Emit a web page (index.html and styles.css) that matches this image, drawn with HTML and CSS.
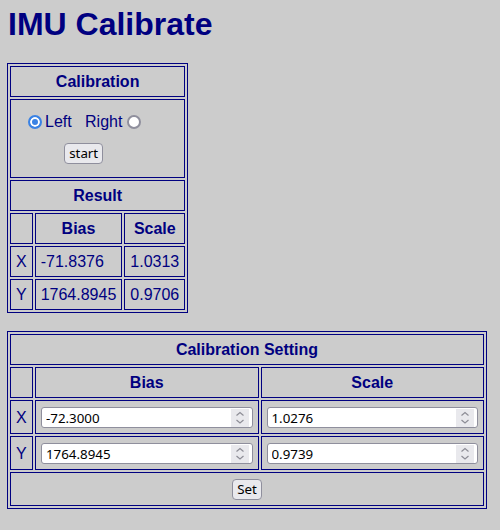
FILE: index.html
```html
<!DOCTYPE html>
<html>
<head>
<meta charset="utf-8">
<title>IMU Calibrate</title>
<link rel="stylesheet" href="styles.css">
</head>
<body>
<h1 class="title">IMU Calibrate</h1>
<table class="grid">
  <tr><th colspan="3">Calibration</th></tr>
  <tr>
    <td colspan="3" class="choice-cell">
      <div class="choice">
        <div class="radios"><input class="radio" type="radio" name="side" checked><span class="radio-text">Left&nbsp;&nbsp;&nbsp;Right</span><input class="radio radio-r" type="radio" name="side"></div>
        <button class="btn" type="button">start</button>
      </div>
    </td>
  </tr>
  <tr><th colspan="3">Result</th></tr>
  <tr><th></th><th>Bias</th><th>Scale</th></tr>
  <tr><td>X</td><td>-71.8376</td><td>1.0313</td></tr>
  <tr><td>Y</td><td>1764.8945</td><td>0.9706</td></tr>
</table>
<br>
<table class="grid wide">
  <colgroup><col class="c-axis"><col class="c-half"><col class="c-half"></colgroup>
  <tr><th colspan="3">Calibration Setting</th></tr>
  <tr><th></th><th>Bias</th><th>Scale</th></tr>
  <tr>
    <td>X</td>
    <td class="field-cell"><div class="field"><input class="num" type="number" value="-72.3000" step="0.0001"><span class="spin"><svg width="18" height="18" viewBox="0 0 18 18"><polyline points="5.5,6.5 9,3.5 12.5,6.5"/><polyline points="5.5,11 9,14 12.5,11"/></svg></span></div></td>
    <td class="field-cell"><div class="field"><input class="num" type="number" value="1.0276" step="0.0001"><span class="spin"><svg width="18" height="18" viewBox="0 0 18 18"><polyline points="5.5,6.5 9,3.5 12.5,6.5"/><polyline points="5.5,11 9,14 12.5,11"/></svg></span></div></td>
  </tr>
  <tr>
    <td>Y</td>
    <td class="field-cell"><div class="field"><input class="num" type="number" value="1764.8945" step="0.0001"><span class="spin"><svg width="18" height="18" viewBox="0 0 18 18"><polyline points="5.5,6.5 9,3.5 12.5,6.5"/><polyline points="5.5,11 9,14 12.5,11"/></svg></span></div></td>
    <td class="field-cell"><div class="field"><input class="num" type="number" value="0.9739" step="0.0001"><span class="spin"><svg width="18" height="18" viewBox="0 0 18 18"><polyline points="5.5,6.5 9,3.5 12.5,6.5"/><polyline points="5.5,11 9,14 12.5,11"/></svg></span></div></td>
  </tr>
  <tr><td colspan="3" class="set-cell"><div class="set-wrap"><button class="btn" type="button">Set</button></div></td></tr>
</table>
</body>
</html>
```
FILE: styles.css
```css
html {
  background: #cccccc;
}
body {
  margin: 0;
  padding: 6px 7px;
  font-family: "Liberation Sans", Arial, sans-serif;
  font-size: 16px;
  color: #000080;
}
.title {
  margin: 0 0 20px 1px;
  font-size: 32px;
  font-weight: bold;
  color: #000080;
}
.grid {
  border: 1px solid #000080;
  border-spacing: 2px;
}
.grid th,
.grid td {
  border: 1px solid #000080;
  padding: 5px;
  line-height: 19px;
  color: #000080;
}
.grid th {
  font-weight: bold;
  text-align: center;
}
.grid td {
  text-align: left;
}
.grid td.choice-cell {
  padding: 12px 5px 13px 5px;
}
.choice {
  display: inline-flex;
  flex-direction: column;
  align-items: center;
  margin-left: 7px;
}
.radios {
  display: flex;
  align-items: center;
  height: 19px;
}
.radio {
  -webkit-appearance: none;
  appearance: none;
  box-sizing: border-box;
  width: 14px;
  height: 14px;
  margin: 1px 3px 0 5px;
  border: 2px solid #8f8f9d;
  border-radius: 50%;
  background: #ffffff;
}
.radio:checked {
  border-color: #3a82e4;
  background: #3a82e4;
  box-shadow: inset 0 0 0 2px #ffffff;
}
.radio-r {
  margin-right: 3px;
}
.btn {
  display: block;
  box-sizing: border-box;
  height: 21px;
  margin: 0;
  padding: 0 4px;
  border: 1px solid #8f8f9d;
  border-radius: 4px;
  background: #e9e9ed;
  color: #000000;
  font-family: "Noto Sans", "Open Sans", sans-serif;
  font-size: 13.33px;
  line-height: 19px;
}
.choice .btn {
  margin-top: 12px;
}
.wide {
  width: 480px;
  table-layout: fixed;
}
.c-axis {
  width: 23px;
}
.c-half {
  width: auto;
}
.grid td.field-cell,
.grid td.set-cell {
  padding: 6px 5px 5px 5px;
}
.field {
  display: flex;
  align-items: center;
  box-sizing: border-box;
  height: 21px;
  padding: 0 3px 0 3px;
  border: 1px solid #8f8f9d;
  border-radius: 3px;
  background: #ffffff;
}
.num {
  flex: 1 1 auto;
  width: 10px;
  min-width: 0;
  height: 19px;
  margin: 0;
  padding: 0 0 0 1px;
  border: none;
  outline: none;
  background: transparent;
  color: #000000;
  font-family: "Noto Sans", "Open Sans", sans-serif;
  font-size: 13.33px;
  -moz-appearance: textfield;
}
.num::-webkit-inner-spin-button,
.num::-webkit-outer-spin-button {
  -webkit-appearance: none;
  margin: 0;
}
.spin {
  display: flex;
  width: 18px;
  height: 18px;
  background: #e9e9ed;
}
.spin polyline {
  fill: none;
  stroke: #8d8d96;
  stroke-width: 1.2;
}
.set-wrap {
  display: flex;
  justify-content: center;
}
```
